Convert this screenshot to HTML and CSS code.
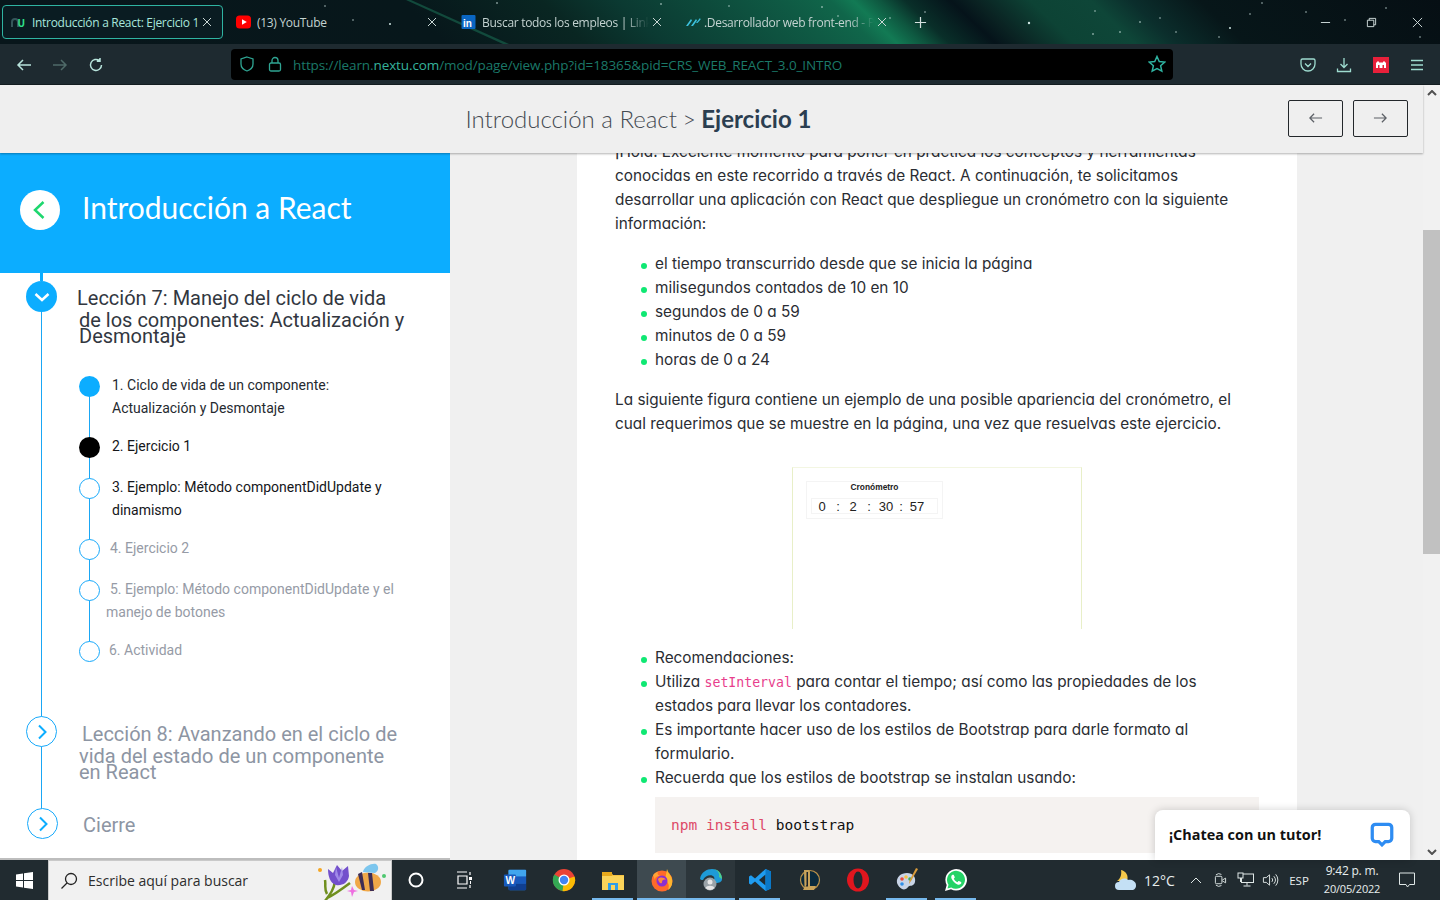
FILE: index.html
```html
<!DOCTYPE html>
<html lang="es">
<head>
<meta charset="utf-8">
<title>Introducción a React: Ejercicio 1</title>
<link rel="stylesheet" href="styles.css">
</head>
<body>
<div class="desktop">
  <header class="tabbar">
    <svg class="wallpaper" viewBox="0 0 1440 44" preserveAspectRatio="none" aria-hidden="true">
      <defs>
        <linearGradient id="aurora" gradientUnits="userSpaceOnUse" x1="0" y1="0" x2="1440" y2="0" gradientTransform="skewX(46)">
          <stop offset="0" stop-color="#08161b"/>
          <stop offset=".278" stop-color="#07171b"/>
          <stop offset=".375" stop-color="#092622"/>
          <stop offset=".430" stop-color="#0b3a32"/>
          <stop offset=".486" stop-color="#0d4a3b"/>
          <stop offset=".542" stop-color="#0f5a44"/>
          <stop offset=".576" stop-color="#10664a"/>
          <stop offset=".592" stop-color="#127a54"/>
          <stop offset=".611" stop-color="#0e563f"/>
          <stop offset=".628" stop-color="#092f29"/>
          <stop offset=".660" stop-color="#05131a"/>
          <stop offset=".677" stop-color="#0a2222"/>
          <stop offset=".715" stop-color="#0d4335"/>
          <stop offset=".757" stop-color="#0e4638"/>
          <stop offset=".785" stop-color="#0b2e2c"/>
          <stop offset=".833" stop-color="#071619"/>
          <stop offset="1" stop-color="#060f14"/>
        </linearGradient>
      </defs>
      <rect width="1440" height="44" fill="url(#aurora)"/>
      <polygon points="406,0 411,0 509,44 503,44" fill="#124a3c"/>
      <g fill="#cfe6e2">
        <circle cx="353" cy="20" r=".7"/><circle cx="390" cy="24" r="1"/><circle cx="325" cy="6" r=".7"/><circle cx="497" cy="3" r=".8"/>
        <circle cx="1029" cy="23" r="1.200"/><circle cx="1095" cy="11" r=".7"/><circle cx="1140" cy="22" r=".8"/><circle cx="1262" cy="3" r=".7"/>
        <circle cx="1093" cy="34" r=".8"/><circle cx="1120" cy="32" r=".8"/><circle cx="1176" cy="32" r=".7"/><circle cx="1230" cy="28" r="1"/>
        <circle cx="1306" cy="12" r=".7"/><circle cx="1345" cy="20" r=".7"/><circle cx="1386" cy="8" r=".7"/><circle cx="1219" cy="37" r=".7"/>
        <circle cx="1420" cy="37" r=".7"/><circle cx="1160" cy="18" r=".7"/><circle cx="1250" cy="14" r=".7"/><circle cx="822" cy="7" r=".8"/>
        <circle cx="838" cy="16" r=".7"/><circle cx="890" cy="18" r=".7"/><circle cx="925" cy="12" r=".7"/><circle cx="661" cy="4" r=".8"/><circle cx="729" cy="6" r=".7"/>
      </g>
    </svg>
    <div class="tab tab-active">
      <svg class="favicon" viewBox="0 0 16 16"><path class="logo-n" d="M1 13V8a3 3 0 0 1 6 0v5"/><text class="logo-u" x="6.500" y="12.500">U</text></svg>
      <span class="tab-title">Introducción a React: Ejercicio 1</span>
      <svg class="tab-close" viewBox="0 0 10 10"><path d="M1 1l8 8M9 1l-8 8"/></svg>
    </div>
    <div class="tab">
      <svg class="favicon" viewBox="0 0 16 16"><rect y="1.500" width="15" height="13" rx="3.500" fill="#f00"/><path d="M6 5.200v5.600L10.800 8z" fill="#fff"/></svg>
      <span class="tab-title">(13) YouTube</span>
      <svg class="tab-close" viewBox="0 0 10 10"><path d="M1 1l8 8M9 1l-8 8"/></svg>
    </div>
    <div class="tab">
      <svg class="favicon" viewBox="0 0 16 16"><rect x="0.500" y="1" width="14" height="14" rx="1" fill="#0a66c2"/><text class="logo-in" x="2" y="12.500">in</text></svg>
      <span class="tab-title tab-fade">Buscar todos los empleos | LinkedIn</span>
      <svg class="tab-close" viewBox="0 0 10 10"><path d="M1 1l8 8M9 1l-8 8"/></svg>
    </div>
    <div class="tab tab-narrow">
      <svg class="favicon" viewBox="0 0 16 16"><path d="M1 12L6 5l1 1.500L3 12zM6 12l5-7 1 1.500L8 12zM11 9l4-5 .6 1.500L12.500 9z" fill="#3cc0dc"/></svg>
      <span class="tab-title tab-fade">.Desarrollador web front-end - Programa</span>
      <svg class="tab-close" viewBox="0 0 10 10"><path d="M1 1l8 8M9 1l-8 8"/></svg>
    </div>
    <svg class="tab-new" viewBox="0 0 14 14"><path d="M7 1v12M1 7h12"/></svg>
    <div class="window-controls">
      <span class="win-slot"><svg viewBox="0 0 12 12"><path d="M1 6h10"/></svg></span>
      <span class="win-slot"><svg viewBox="0 0 12 12"><path d="M1.500 3.500h7v7h-7zM3.500 3.500v-2h7v7h-2"/></svg></span>
      <span class="win-slot"><svg viewBox="0 0 12 12"><path d="M1 1l10 10M11 1L1 11"/></svg></span>
    </div>
  </header>

  <nav class="toolbar">
    <span class="tool"><svg viewBox="0 0 16 16"><path d="M15 8H2M7 3L2 8l5 5"/></svg></span>
    <span class="tool tool-dim"><svg viewBox="0 0 16 16"><path d="M1 8h13M9 3l5 5-5 5"/></svg></span>
    <span class="tool"><svg viewBox="0 0 16 16"><path d="M13.500 8a5.500 5.500 0 1 1-2-4.300M12 1v3.200H8.800"/></svg></span>
    <div class="urlbar">
      <svg class="url-icon" viewBox="0 0 16 16"><path d="M8 1l6 2v5c0 3.500-3 6-6 7-3-1-6-3.500-6-7V3z"/></svg>
      <svg class="url-icon url-lock" viewBox="0 0 16 16"><rect x="2.500" y="7" width="11" height="8" rx="1.500"/><path d="M5 7V4.500a3 3 0 0 1 6 0V7"/></svg>
      <span class="url-text">https://learn.<b>nextu.com</b>/mod/page/view.php?id=18365&amp;pid=CRS_WEB_REACT_3.0_INTRO</span>
      <svg class="url-icon url-star" viewBox="0 0 16 16"><path d="M8 1.300l2 4.500 4.900.5-3.700 3.200 1.100 4.800L8 12l-4.300 2.300 1.100-4.800L1.100 6.300 6 5.800z"/></svg>
    </div>
    <div class="tool-group">
      <span class="tool tool-light"><svg viewBox="0 0 16 16"><path d="M2.500 2h11A1.500 1.500 0 0 1 15 3.500V7A7 7 0 0 1 1 7V3.500A1.500 1.500 0 0 1 2.500 2zM5 6.500l3 3 3-3"/></svg></span>
      <span class="tool tool-light"><svg viewBox="0 0 16 16"><path d="M8 1v9.500M4.500 7L8 10.500 11.500 7M1.500 11.500v3h13v-3"/></svg></span>
      <span class="tool"><svg class="ext-icon" viewBox="0 0 16 16"><rect width="16" height="16" fill="#e8203a"/><path d="M3 11V6l2-2 2 2 1-1 1 1 2-2 2 2v5h-2V8H9.500v3h-3V8H5v3z" fill="#fff"/></svg></span>
      <span class="tool tool-light"><svg viewBox="0 0 16 16"><path d="M2 3.500h12M2 8h12M2 12.500h12"/></svg></span>
    </div>
  </nav>

  <div class="app">
    <div class="page">
      <div class="page-head">
        <h1 class="page-title"><span class="crumb">Introducción a React</span> <span class="crumb-sep">&gt;</span> <strong>Ejercicio 1</strong></h1>
        <div class="pager">
          <button class="pager-btn"><svg viewBox="0 0 16 12"><path d="M15 6H2M6.500 1.500L2 6l4.500 4.500"/></svg></button>
          <button class="pager-btn"><svg viewBox="0 0 16 12"><path d="M1 6h13M9.500 1.500L14 6l-4.500 4.500"/></svg></button>
        </div>
      </div>
      <div class="page-body">
        <aside class="sidebar">
          <div class="course-head">
            <span class="back-circle"><svg viewBox="0 0 14 20"><path d="M10.500 2L2 10l8.500 8"/></svg></span>
            <h2 class="course-title">Introducción a React</h2>
          </div>
          <div class="timeline">
            <section class="lesson lesson-open">
              <span class="lesson-dot lesson-dot-full"><svg viewBox="0 0 16 16"><path d="M1.500 5L8 11l6.500-6"/></svg></span>
              <h3 class="lesson-title"><span class="lt-a">Lección 7: Manejo del ciclo de vida</span><span class="lt-b">de los componentes: Actualización y</span><span class="lt-c">Desmontaje</span></h3>
            </section>
            <ol class="steps">
              <li class="step"><span class="step-dot step-current"></span><span class="step-text t-dark">1. Ciclo de vida de un componente:<br>Actualización y Desmontaje</span></li>
              <li class="step"><span class="step-dot step-active"></span><span class="step-text t-black">2. Ejercicio 1</span></li>
              <li class="step"><span class="step-dot"></span><span class="step-text t-black">3. Ejemplo: Método componentDidUpdate y<br>dinamismo</span></li>
              <li class="step"><span class="step-dot"></span><span class="step-text t-grey s-10">4. Ejercicio 2</span></li>
              <li class="step"><span class="step-dot"></span><span class="step-text t-grey s-6"><span class="indent">5. Ejemplo: Método componentDidUpdate y el</span><br>manejo de botones</span></li>
              <li class="step step-last"><span class="step-dot"></span><span class="step-text t-grey s-9">6. Actividad</span></li>
            </ol>
            <section class="lesson lesson-8">
              <span class="lesson-dot"><svg viewBox="0 0 16 16"><path d="M5 1.500L11.500 8 5 14.500"/></svg></span>
              <h3 class="lesson-title t-muted"><span class="lt-a lt-in">Lección 8: Avanzando en el ciclo de</span><span class="lt-b">vida del estado de un componente</span><span class="lt-c">en React</span></h3>
            </section>
            <section class="lesson lesson-end">
              <span class="lesson-dot"><svg viewBox="0 0 16 16"><path d="M5 1.500L11.500 8 5 14.500"/></svg></span>
              <h3 class="lesson-title t-muted"><span class="lt-a">Cierre</span></h3>
            </section>
          </div>
        </aside>
        <main class="content">
          <article class="article">
            <p>¡Hola! Excelente momento para poner en práctica los conceptos y herramientas conocidas en este recorrido a través de React. A continuación, te solicitamos desarrollar una aplicación con React que despliegue un cronómetro con la siguiente información:</p>
            <ul>
              <li>el tiempo transcurrido desde que se inicia la página</li>
              <li>milisegundos contados de 10 en 10</li>
              <li>segundos de 0 a 59</li>
              <li>minutos de 0 a 59</li>
              <li>horas de 0 a 24</li>
            </ul>
            <p>La siguiente figura contiene un ejemplo de una posible apariencia del cronómetro, el cual requerimos que se muestre en la página, una vez que resuelvas este ejercicio.</p>
            <figure class="figure">
              <div class="chrono">
                <div class="chrono-title">Cronómetro</div>
                <div class="chrono-box"><span class="c1">0</span><span class="c2">:</span><span class="c3">2</span><span class="c4">:</span><span class="c5">30</span><span class="c6">:</span><span class="c7">57</span></div>
              </div>
            </figure>
            <ul>
              <li>Recomendaciones:</li>
              <li>Utiliza <code>setInterval</code> para contar el tiempo; así como las propiedades de los<br>estados para llevar los contadores.</li>
              <li>Es importante hacer uso de los estilos de Bootstrap para darle formato al formulario.</li>
              <li>Recuerda que los estilos de bootstrap se instalan usando:
                <pre class="code"><span class="kw">npm install</span> bootstrap</pre>
              </li>
            </ul>
          </article>
        </main>
      </div>
      <div class="chat">
        <span class="chat-text">¡Chatea con un tutor!</span>
        <svg class="chat-icon" viewBox="0 0 24 24"><path d="M6 3h12a3 3 0 0 1 3 3v10a3 3 0 0 1-3 3h-3l-3 3-3-3H6a3 3 0 0 1-3-3V6a3 3 0 0 1 3-3z"/></svg>
      </div>
    </div>
    <div class="scrollbar">
      <svg class="sb-arrow" viewBox="0 0 10 6"><path d="M1 5l4-4 4 4"/></svg>
      <div class="sb-track"><div class="sb-thumb"></div></div>
      <svg class="sb-arrow" viewBox="0 0 10 6"><path d="M1 1l4 4 4-4"/></svg>
    </div>
  </div>

  <footer class="taskbar">
    <span class="start"><svg viewBox="0 0 17 17"><path d="M0 2.400l7-1V8H0zM8 1.200L17 0v8H8zM0 9h7v6.600l-7-1zM8 9h9v8l-9-1.200z" fill="#fff"/></svg></span>
    <div class="search">
      <svg class="search-icon" viewBox="0 0 18 18"><circle cx="11" cy="7" r="5.500"/><path d="M7 11l-5.500 5.500"/></svg>
      <span class="search-text">Escribe aquí para buscar</span>
      <svg class="search-art" viewBox="0 0 76 40">
        <circle cx="4" cy="9" r="2" fill="#f5a623"/>
        <path d="M9 40C15 32 18 28 19 20M11 37c7-3 15-9 23-15M11 33C8 28 10 24 9 19" fill="none" stroke="#6f8f1e" stroke-width="2.500"/>
        <path d="M12 8l5 4 4-8 5 6 6-5 1 10c-1 7-7 10-13 9-6-2-8-9-8-16z" fill="#7350cc"/>
        <path d="M20 6l3 11 3-11 1 8-4 7-4-7z" fill="#a08ae8"/>
        <path d="M36 25l2 4 4 1-4 1-2 5-1-5-4-1 4-1z" fill="#ee6fe0"/>
        <ellipse cx="52" cy="21" rx="13" ry="9.500" fill="#f0a848"/>
        <path d="M42 13l4 16h3l-3-18zM52 12l2 18h4l-2-18z" fill="#3e2d55"/>
        <path d="M47 11c1-6 9-9 13-8 3 2 3 7-1 9z" fill="#7cc6ee"/>
        <circle cx="68" cy="15" r="2" fill="#4fc870"/>
      </svg>
    </div>
    <span class="task"><svg viewBox="0 0 20 20"><circle cx="10" cy="10" r="6.500" fill="none" stroke="#fff" stroke-width="2"/></svg></span>
    <span class="task"><svg viewBox="0 0 20 20"><path d="M3 2h10M3 18h10M4 6h9v8H4zM16 2v3M16 15v3" fill="none" stroke="#fff" stroke-width="1.200"/><rect x="15" y="7" width="3" height="3" fill="#fff"/><path d="M16.500 11v3" stroke="#fff"/></svg></span>
    <span class="app-slot first-app"><svg viewBox="0 0 26 24"><rect x="6" y="1" width="19" height="22" rx="1.500" fill="#2b7cd3"/><rect x="6" y="8" width="19" height="8" fill="#185abd"/><rect x="6" y="16" width="19" height="7" fill="#103f91"/><rect x="6" y="1" width="19" height="7" fill="#41a5ee"/><rect x="1" y="6" width="13" height="13" rx="1" fill="#185abd"/><text class="logo-w" x="2.800" y="16.500">W</text></svg></span>
    <span class="app-slot"><svg viewBox="0 0 24 24"><circle cx="12" cy="12" r="11" fill="#ea4335"/><path d="M12 12L22.500 8.500A11 11 0 0 1 10 22.900z" fill="#fbbc04"/><path d="M12 12L10.500 23A11 11 0 0 1 2.300 6.500z" fill="#34a853"/><circle cx="12" cy="12" r="5.500" fill="#fff"/><circle cx="12" cy="12" r="4.200" fill="#4285f4"/></svg></span>
    <span class="app-slot app-open"><svg viewBox="0 0 24 24"><path d="M1 4h9l2 3h11v15H1z" fill="#f5c242"/><rect x="1" y="4" width="10" height="4" fill="#e8a91c"/><rect x="1" y="8" width="22" height="14" fill="#fbd45a"/><rect x="7" y="15" width="10" height="7" fill="#2f9ee8"/><rect x="10" y="17" width="4" height="5" fill="#fbd45a"/></svg></span>
    <span class="app-slot app-open app-active"><svg viewBox="0 0 24 24"><circle cx="12" cy="13" r="10.500" fill="#ff6a2a"/><path d="M17 1c1 4 4 6 5 10 1 5-1 9-4 11 2-5 0-8-3-10z" fill="#ffb52e"/><path d="M3 7c2-2 3-3 5-3-1 2 0 3 2 4-4 0-5 2-5 4z" fill="#ffa436"/><circle cx="12" cy="13" r="5.500" fill="#8b2fd0"/><path d="M8 11c2-2 6-2 8 1-2-1-4 0-4 2s-3 2-4-3z" fill="#ff8a3c"/></svg></span>
    <span class="app-slot app-open app-soft"><svg viewBox="0 0 24 24"><path d="M1 11C2 4 8 1 13 1c6 0 10 5 10 10 0 3-3 4-6 4-2 0-4-1-4-3 2 0 3-1 2-3-2-3-9-2-11 3-1 0-2 0-3-1z" fill="#1e9bd8"/><path d="M23 11c0-6-4-10-10-10 5 0 8 4 7 8z" fill="#4fd08a"/><circle cx="11" cy="16" r="6.500" fill="#9aa3a8"/><circle cx="11" cy="14" r="2.500" fill="#e6e6e6"/><path d="M6.500 20c1-3 8-3 9 0a6 6 0 0 1-9 0z" fill="#e6e6e6"/></svg></span>
    <span class="app-slot app-open"><svg viewBox="0 0 24 24"><path d="M17.500 1L23 3.500v17L17.500 23 7 13.500 3 16.700 1 15.500V8.500l2-1.200 4 3.200z" fill="#1f9cf0"/><path d="M17.500 6.500L11 12l6.500 5.500z" fill="#1f2a30"/><path d="M17.500 1L23 3.500v17L17.500 23z" fill="#0a78c8"/></svg></span>
    <span class="app-slot"><svg viewBox="0 0 24 24"><circle cx="13" cy="12" r="9.500" fill="#0a2a3c" stroke="#b9924a" stroke-width="1.200"/><path d="M7 2h5l1 1.500V18h6l-2 4H6l1.500-3z" fill="#c8a35a"/><path d="M9.500 4h1.500v14.500H8.500L9.500 17z" fill="#1a2228"/></svg></span>
    <span class="app-slot"><svg viewBox="0 0 24 24"><ellipse cx="12" cy="12" rx="11" ry="11.500" fill="#e0161e"/><ellipse cx="12" cy="12" rx="4.500" ry="8.500" fill="#1f2a30"/></svg></span>
    <span class="app-slot app-open"><svg viewBox="0 0 24 24"><path d="M2 15C1 9 6 5 12 5s9 4 8 9-6 3-7 5-4 3-6 2-4-3-5-6z" fill="#c8d4e6"/><circle cx="7" cy="11" r="1.800" fill="#e84a3a"/><circle cx="11" cy="9" r="1.800" fill="#f5c242"/><circle cx="15" cy="11" r="1.800" fill="#3cb45a"/><circle cx="7" cy="16" r="1.800" fill="#2f8fe8"/><path d="M23 1l-7 12-2 3 .5-3.500L21 0z" fill="#d89a3a"/></svg></span>
    <span class="app-slot app-open"><svg viewBox="0 0 24 24"><path d="M1 23l1.700-6A10.800 10.800 0 1 1 7 21.300z" fill="#fff"/><path d="M3.500 20.500l1-3.700A9 9 0 1 1 7.300 19.500z" fill="#25d366"/><path d="M8.500 6.800c-1 .5-1.700 2-1 3.700 1 2.500 3.500 5 6 6 1.700.6 3.300 0 3.800-1.200.2-.6 0-1-.3-1.200l-2-1c-.4-.2-.7 0-.9.300l-.7.800c-1.600-.6-3-2-3.600-3.600l.7-.7c.3-.3.3-.6.200-.9l-.9-2c-.2-.4-.8-.4-1.300-.2z" fill="#fff"/></svg></span>
    <div class="tray">
      <span class="tr tr-weather"><svg viewBox="0 0 24 24"><path d="M4 13C7 11 9 7 8 2c5 1 8 6 6 11z" fill="#f5c84a"/><path d="M6 22a4 4 0 0 1 0-8c1-3 6-5 9-2 3-1 8 1 8 5a5 5 0 0 1-3 5z" fill="#c4e0f5"/></svg></span>
      <span class="tr tr-temp">12°C</span>
      <span class="tr tr-chev"><svg viewBox="0 0 12 8"><path d="M1 7l5-5 5 5"/></svg></span>
      <span class="tr tr-meet"><svg viewBox="0 0 14 16"><rect x="1.500" y="4" width="7" height="8" rx="1"/><path d="M9 8l3.500-2v5L9 9M2 2.500A5 5 0 0 1 8 2M2 13.500a5 5 0 0 0 6 .500"/></svg></span>
      <span class="tr tr-net"><svg viewBox="0 0 17 16"><rect x="4.500" y="2" width="12" height="8.500"/><path d="M10 10.500v3M6.500 14h7"/><rect x="1" y="1" width="5" height="5" fill="#1f2a30"/><path d="M3.500 6v4"/></svg></span>
      <span class="tr tr-vol"><svg viewBox="0 0 18 16"><path d="M1.500 5.500h3L8 2.500v11l-3.500-3h-3zM10.500 6a3 3 0 0 1 0 4M12.500 4a6 6 0 0 1 0 8M14.500 2a9 9 0 0 1 0 12"/></svg></span>
      <span class="tr tr-lang">ESP</span>
      <span class="tr tr-clock"><span>9:42 p. m.</span><span class="tr-date">20/05/2022</span></span>
      <span class="tr tr-note"><svg viewBox="0 0 18 18"><path d="M1.500 2h15v11.500h-5L9.500 16 8 13.500H1.500z"/></svg></span>
    </div>
  </footer>
</div>
</body>
</html>
```
FILE: styles.css
```css
* { box-sizing: border-box; }
html, body { margin: 0; height: 100%; overflow: hidden; }
body { font-family: "Open Sans", "Noto Sans", sans-serif; }
svg { display: block; }
.desktop { width: 1440px; height: 900px; display: flex; flex-direction: column; background: #1f2a30; }

/* tab strip */
.tabbar { position: relative; height: 44px; flex: none; display: flex; align-items: center; padding-left: 2px; gap: 4px; background: #07141a; overflow: hidden; }
.wallpaper { position: absolute; left: 0; top: 0; width: 1440px; height: 44px; }
.tab { position: relative; width: 221px; height: 34px; flex: none; display: flex; align-items: center; padding: 0 10px 0 8px; border: 1px solid transparent; border-radius: 4px; color: #c4d3d1; font-size: 12px; }
.tab-active { background: #0a1c22; border-color: #2fb4a2; color: #a8e6dc; }
.tab-narrow { padding-left: 7px; }
.favicon { width: 16px; height: 16px; flex: none; margin-right: 5px; }
.tab-narrow .favicon { margin-right: 3px; }
.logo-n { fill: none; stroke: #35565a; stroke-width: 2; }
.logo-u { font: 700 10px "Open Sans", sans-serif; fill: #2fe08a; }
.logo-in { font: 700 10px "Liberation Sans", sans-serif; fill: #fff; }
.logo-w { font: 700 11px "Liberation Sans", sans-serif; fill: #fff; }
.tab-title { flex: 1; min-width: 0; white-space: nowrap; overflow: hidden; letter-spacing: -.3px; }
.tab-fade { -webkit-mask-image: linear-gradient(90deg, #000 85%, transparent 100%); mask-image: linear-gradient(90deg, #000 85%, transparent 100%); }
.tab-close { width: 10px; height: 10px; flex: none; margin-left: 3px; fill: none; stroke: #c8d6d4; stroke-width: 1; }
.tab-new { position: relative; width: 13px; height: 13px; margin-left: 12px; fill: none; stroke: #d6e2e0; stroke-width: 1.300; }
.window-controls { position: relative; margin-left: auto; display: flex; }
.win-slot { width: 46px; height: 44px; display: flex; align-items: center; justify-content: center; }
.win-slot svg { width: 11px; height: 11px; fill: none; stroke: #d8e4e2; stroke-width: 1; }

/* toolbar */
.toolbar { height: 41px; flex: none; display: flex; align-items: center; padding: 0 5px 0 6px; background: #1e2a30; border-bottom: 1px solid #141d21; }
.tool { width: 36.330px; height: 32px; flex: none; display: flex; align-items: center; justify-content: center; padding-top: 1px; }
.toolbar > .tool { width: 36px; }
.tool svg { width: 16px; height: 16px; fill: none; stroke: #b8e4dc; stroke-width: 1.500; }
.tool-dim svg { stroke: #4f6a68; }
.tool-light svg { stroke: #9edcd0; stroke-width: 1.300; }
.tool .ext-icon { stroke: none; }
.urlbar { width: 942px; height: 31px; margin-left: 117px; display: flex; align-items: center; background: #000; border-radius: 4px; padding: 0 7px 0 8px; }
.url-icon { width: 16px; height: 16px; flex: none; fill: none; stroke: #2fa593; stroke-width: 1.300; }
.url-lock { margin-left: 12px; }
.url-text { margin-left: 10px; padding-top: 1px; flex: 1; font: 13.500px "Open Sans", sans-serif; color: #1b7868; letter-spacing: -.1px; white-space: nowrap; }
.url-text b { font-weight: 400; color: #35b29c; }
.url-star { width: 18px; height: 18px; stroke: #2fb4a2; }
.tool-group { margin-left: auto; display: flex; }

/* page */
.app { flex: 1; min-height: 0; display: flex; }
.page { position: relative; width: 1423px; flex: none; display: flex; flex-direction: column; background: #f0f0f0; }
.page-head { position: relative; z-index: 2; height: 68px; flex: none; display: flex; align-items: center; padding-bottom: 2px; background: #efefef; box-shadow: 0 1px 2px rgba(0,0,0,.3); }
.page-title { width: 1277px; margin: 0; text-align: center; font: 300 24px "Lato", sans-serif; color: #454b52; }
.page-title strong { font-weight: 700; color: #2b3e50; }
.crumb-sep { margin: 0 -1px 0 -1px; font-size: 23px; }
.pager { margin-left: 11px; display: flex; gap: 10px; }
.pager-btn { width: 55px; height: 37px; padding: 0; display: flex; align-items: center; justify-content: center; background: transparent; border: 1px solid #23272b; border-radius: 2px; }
.pager-btn svg { width: 15px; height: 12px; fill: none; stroke: #5c6066; stroke-width: 1.300; }
.page-body { flex: 1; min-height: 0; display: flex; }

/* sidebar */
.sidebar { width: 450px; flex: none; display: flex; flex-direction: column; background: #fff; border-bottom: 2px solid #bdbdbd; overflow: hidden; }
.course-head { height: 120px; flex: none; display: flex; align-items: center; padding: 0 0 6px 20px; background: #0cadff; }
.back-circle { width: 40px; height: 40px; flex: none; display: flex; align-items: center; justify-content: center; border-radius: 50%; background: #fff; }
.back-circle svg { width: 14px; height: 20px; fill: none; stroke: #1ed76e; stroke-width: 2.500; }
.course-title { margin: 0 0 7px 22px; font: 400 30px "Lato", sans-serif; color: #fff; white-space: nowrap; }
.timeline { position: relative; flex: 1; min-height: 0; font-family: "Roboto", sans-serif; }
.timeline::before { content: ""; position: absolute; left: 41px; top: 0; bottom: 40px; width: 1px; background: #1aa7f5; }
.timeline::after { content: ""; position: absolute; left: 40px; top: 0; width: 3px; height: 8px; background: #0cadff; }
.lesson { position: relative; display: flex; }
.lesson-open { padding: 8px 0 0 26px; height: 103px; }
.lesson-8 { margin-top: 34px; padding-left: 26px; height: 92px; }
.lesson-end { padding-left: 27px; }
.lesson-dot { width: 31px; height: 31px; flex: none; display: flex; align-items: center; justify-content: center; border-radius: 50%; background: #fff; border: 1.500px solid #17a9fb; }
.lesson-dot svg { width: 16px; height: 16px; fill: none; stroke: #0cadff; stroke-width: 2; }
.lesson-dot-full { background: #0cadff; border: 0; }
.lesson-dot-full svg { stroke: #fff; stroke-width: 2.500; }
.lesson-title { margin: 0 0 0 20px; font-size: 20px; font-weight: 400; color: #32373f; white-space: nowrap; }
.lesson-title span { display: block; }
.lt-a { height: 22px; line-height: 22px; margin-top: 6px; }
.lt-b { height: 16px; line-height: 22px; padding-left: 2px; }
.lt-c { height: 20px; line-height: 22px; padding-left: 2px; }
.lesson-8 .lesson-title { margin-left: 22px; }
.lesson-8 .lt-a { margin-top: 7px; }
.lt-in { padding-left: 3px; }
.lesson-8 .lt-b, .lesson-8 .lt-c { padding-left: 0; }
.lesson-end .lesson-title { margin-left: 25px; }
.t-muted { color: #8d95a3; }
.steps { position: relative; list-style: none; margin: 0; padding: 0 0 0 79px; }
.steps::before { content: ""; position: absolute; left: 89px; top: 5px; height: 265px; width: 1px; background: #1aa7f5; }
.step { position: relative; display: flex; min-height: 41px; font-size: 14px; line-height: 23px; }
.step-dot { width: 21px; height: 21px; flex: none; border-radius: 50%; background: #fff; border: 1.500px solid #17a9fb; }
.step-current { background: #0cadff; border: 0; }
.step-active { background: #000; border: 0; }
.step-text { margin: -2px 0 17px 12px; white-space: nowrap; }
.s-10 { margin-left: 10px; }
.s-9 { margin-left: 9px; }
.s-6 { margin-left: 6px; }
.indent { padding-left: 4px; }
.t-dark { color: #262a30; }
.t-black { color: #14161a; }
.t-grey { color: #969ba6; }

/* article */
.content { flex: 1; min-width: 0; overflow: hidden; background: #f0f0f0; }
.article { width: 720px; height: 800px; margin: -13px 0 0 127px; padding: 0 38px; background: #fff; font: 400 15.350px/24px "Inter", sans-serif; font-feature-settings: "cv11"; color: #2a2d33; }
.article p { margin: 0 0 16px; }
.article ul { margin: 0 0 16px; padding-left: 40px; list-style: none; }
.article li { position: relative; }
.article li::before { content: ""; position: absolute; left: -14px; top: 11px; width: 6px; height: 6px; border-radius: 50%; background: #0fe873; }
.article code { font: 13.200px "DejaVu Sans Mono", monospace; color: #e83e8c; }
.code { height: 56px; margin: 7px 0 0; padding: 0 16px; font: 14.500px/56px "DejaVu Sans Mono", monospace; color: #111; background: #f5f2f0; }
.kw { color: #dd4a68; }
.figure { width: 290px; height: 162px; margin: 31px 0 17px 177px; padding: 13px 0 0 13px; border: 1px solid #e8efc8; border-bottom: 0; border-top-color: #f3f6e2; font-family: "Liberation Sans", sans-serif; color: #222; }
.chrono { width: 137px; height: 38px; padding: 0 4px; border: 1px solid #f4f4f4; }
.chrono-title { height: 16px; font-size: 8.400px; font-weight: 700; line-height: 10px; text-align: center; }
.chrono-box { height: 16px; display: flex; border: 1px solid #f4f4f4; font-size: 13px; line-height: 15px; }
.chrono-box span { display: block; text-align: center; }
.c1 { width: 20px; }
.c2 { width: 12px; }
.c3 { width: 18px; }
.c4 { width: 14px; }
.c5 { width: 20px; }
.c6 { width: 10px; }
.c7 { width: 22px; }

/* chat */
.chat { position: absolute; left: 1155px; bottom: 0; z-index: 3; width: 255px; height: 50px; display: flex; align-items: center; justify-content: space-between; padding: 0 15px 2px 14px; background: #fff; border-radius: 8px 8px 0 0; box-shadow: 0 0 8px rgba(0,0,0,.18); }
.chat-text { font: 700 14.400px "Open Sans", sans-serif; color: #111; }
.chat-icon { width: 26px; height: 26px; fill: #fff; stroke: #2e8cf2; stroke-width: 3; }

/* scrollbar */
.scrollbar { width: 17px; flex: none; display: flex; flex-direction: column; align-items: center; background: #f1f1f1; }
.sb-arrow { width: 10px; height: 6px; margin: 5px 0; fill: none; stroke: #505050; stroke-width: 2; flex: none; }
.sb-track { flex: 1; width: 100%; padding-top: 129px; }
.sb-thumb { width: 100%; height: 324px; background: #c1c1c1; }

/* taskbar */
.taskbar { height: 40px; flex: none; display: flex; background: #212b30; }
.start { width: 48px; display: flex; align-items: center; justify-content: center; }
.start svg { width: 17px; height: 17px; }
.search { width: 344px; flex: none; display: flex; align-items: center; padding-left: 11px; background: #f1f1f1; border: 1px solid #c9c9c9; border-width: 1px 1px 0; overflow: hidden; }
.search-icon { width: 18px; height: 18px; fill: none; stroke: #222; stroke-width: 1.300; flex: none; }
.search-text { margin-left: 10px; font: 14px "Open Sans", sans-serif; color: #2d2d2d; }
.search-art { width: 76px; height: 40px; margin-left: auto; margin-right: -1px; flex: none; }
.task { width: 48px; flex: none; display: flex; align-items: center; justify-content: center; }
.task svg { width: 20px; height: 20px; }
.app-slot { position: relative; width: 49px; flex: none; display: flex; align-items: center; justify-content: center; }
.first-app { margin-left: 2px; }
.app-slot svg { width: 24px; height: 24px; }
.app-open::after { content: ""; position: absolute; left: 4px; right: 4px; bottom: 0; height: 2px; background: #76b9ed; }
.app-active { background: #3e4a50; }
.app-soft { background: #2c363b; }
.app-active::after, .app-soft::after { left: 0; right: 0; }
.tray { margin-left: auto; display: flex; width: 327px; padding-right: 15px; color: #e8eeee; }
.tr { display: flex; align-items: center; justify-content: center; flex: none; font-size: 12px; }
.tr svg { fill: none; stroke: #dfe7e6; stroke-width: 1; }
.tr-weather { width: 31px; justify-content: flex-start; }
.tr-weather svg { width: 24px; height: 24px; stroke: none; }
.tr-temp { width: 40px; justify-content: flex-start; font-size: 14px; }
.tr-chev { width: 24px; }
.tr-chev svg { width: 12px; height: 8px; }
.tr-meet { width: 25px; }
.tr-meet svg { width: 13px; height: 16px; }
.tr-net { width: 24px; }
.tr-net svg { width: 17px; height: 16px; }
.tr-vol { width: 26px; }
.tr-vol svg { width: 17px; height: 16px; }
.tr-lang { width: 32px; font-size: 11.500px; }
.tr-clock { width: 74px; flex-direction: column; gap: 3px; padding-bottom: 1px; line-height: 15px; letter-spacing: -.2px; }
.tr-date { font-size: 11px; }
.tr-note { width: 36px; }
.tr-note svg { width: 18px; height: 18px; }
```
